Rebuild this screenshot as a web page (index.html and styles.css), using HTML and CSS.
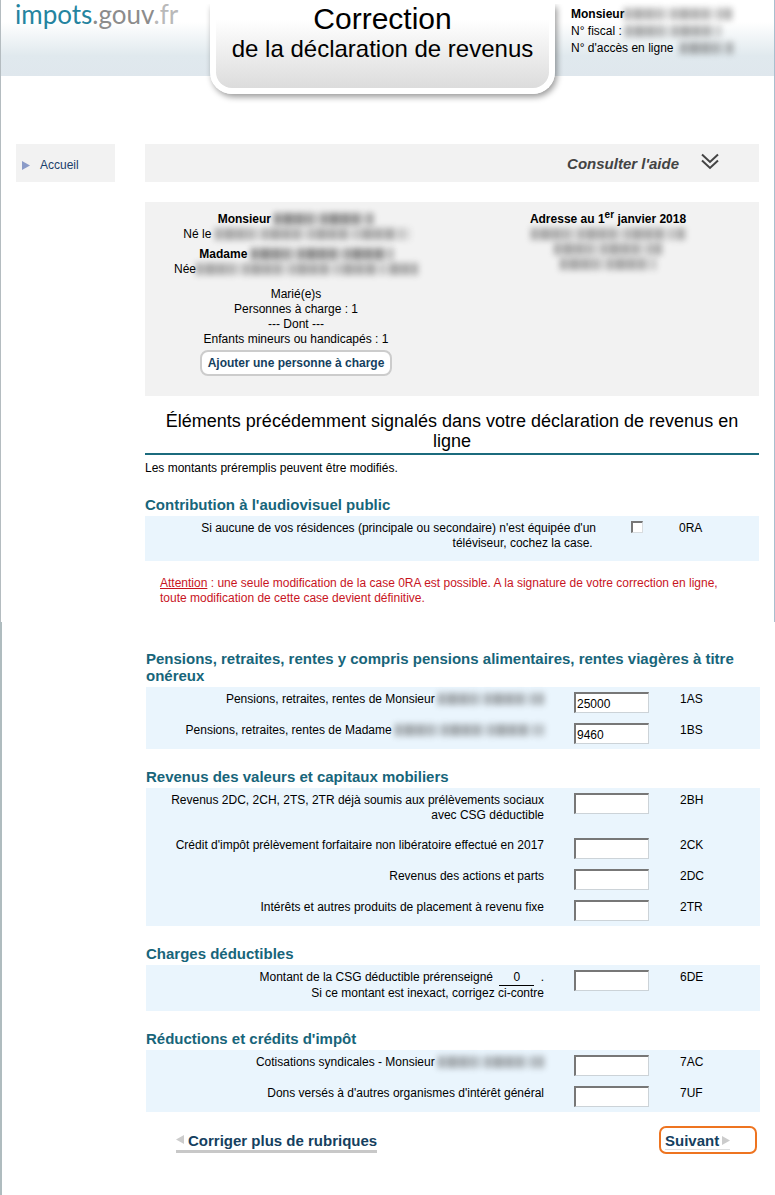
FILE: index.html
```html
<!DOCTYPE html>
<html lang="fr">
<head>
<meta charset="utf-8">
<meta name="viewport" content="width=device-width, initial-scale=1">
<title>Correction de la déclaration de revenus</title>
<link rel="stylesheet" href="styles.css">
</head>
<body>
<div class="upper">
  <header class="header">
    <a class="logo" href="#">impots<span class="logo-gouv">.gouv</span><span class="logo-fr">.fr</span></a>
    <h1 class="banner"><span class="banner-main">Correction</span><span class="banner-sub">de la déclaration de revenus</span></h1>
    <div class="account">
      <div><b>Monsieur</b><span class="mask mask-108"></span></div>
      <div>N° fiscal : <span class="mask mask-96"></span></div>
      <div>N° d'accès en ligne <span class="mask mask-code"></span></div>
    </div>
  </header>
  <div class="layout">
    <nav class="menu">
      <a class="menu-link" href="#"><svg class="menu-arrow" viewBox="0 0 8 9"><path d="M0 0L8 4.5L0 9Z" fill="#8b9bc8"/></svg>Accueil</a>
    </nav>
    <main class="content">
      <button class="help" type="button">Consulter l'aide
        <svg class="help-icon" viewBox="0 0 18 22"><path d="M1 1.500L9 9L17 1.500M1 7.500L9 15L17 7.500" fill="none" stroke="#444" stroke-width="2"/></svg>
      </button>
      <section class="identity">
        <div>
          <div class="person">
            <div><b>Monsieur</b> <span class="mask mask-100 dark"></span></div>
            <div>Né le <span class="mask mask-194"></span></div>
          </div>
          <div class="person">
            <div><b>Madame</b> <span class="mask mask-142 dark"></span></div>
            <div>Née<span class="mask mask-222"></span></div>
          </div>
          <div class="family">
            <div>Marié(e)s</div>
            <div>Personnes à charge : 1</div>
            <div>--- Dont ---</div>
            <div>Enfants mineurs ou handicapés : 1</div>
          </div>
          <button class="add" type="button">Ajouter une personne à charge</button>
        </div>
        <div class="address">
          <b>Adresse au 1<sup>er</sup> janvier 2018</b>
          <div><span class="mask mask-154"></span></div>
          <div><span class="mask mask-108"></span></div>
          <div><span class="mask mask-96"></span></div>
        </div>
      </section>
      <h2 class="title">Éléments précédemment signalés dans votre déclaration de revenus en ligne</h2>
      <p class="intro">Les montants préremplis peuvent être modifiés.</p>
      <h3 class="heading">Contribution à l'audiovisuel public</h3>
      <table class="fields">
        <tr>
          <td class="label"><label for="f0ra">Si aucune de vos résidences (principale ou secondaire) n'est équipée d'un téléviseur, cochez la case.&nbsp;</label></td>
          <td class="check-cell"><input class="check" type="checkbox" id="f0ra"></td>
          <td class="code">0RA</td>
        </tr>
      </table>
      <p class="warning"><u>Attention</u> : une seule modification de la case 0RA est possible. A la signature de votre correction en ligne, toute modification de cette case devient définitive.</p>
    </main>
  </div>
</div>
<div class="lower">
  <h3 class="heading">Pensions, retraites, rentes y compris pensions alimentaires, rentes viagères à titre onéreux</h3>
  <table class="fields">
    <tr>
      <td class="label"><label for="f1as">Pensions, retraites, rentes de Monsieur <span class="mask mask-106"></span></label></td>
      <td class="field"><input class="amount" type="text" id="f1as" value="25000"></td>
      <td class="code">1AS</td>
    </tr>
    <tr>
      <td class="label"><label for="f1bs">Pensions, retraites, rentes de Madame <span class="mask mask-149"></span></label></td>
      <td class="field"><input class="amount" type="text" id="f1bs" value="9460"></td>
      <td class="code">1BS</td>
    </tr>
  </table>
  <h3 class="heading">Revenus des valeurs et capitaux mobiliers</h3>
  <table class="fields">
    <tr>
      <td class="label"><label for="f2bh">Revenus 2DC, 2CH, 2TS, 2TR déjà soumis aux prélèvements sociaux avec CSG déductible</label></td>
      <td class="field"><input class="amount" type="text" id="f2bh"></td>
      <td class="code">2BH</td>
    </tr>
    <tr>
      <td class="label"><label for="f2ck">Crédit d'impôt prélèvement forfaitaire non libératoire effectué en 2017</label></td>
      <td class="field"><input class="amount" type="text" id="f2ck"></td>
      <td class="code">2CK</td>
    </tr>
    <tr>
      <td class="label"><label for="f2dc">Revenus des actions et parts</label></td>
      <td class="field"><input class="amount" type="text" id="f2dc"></td>
      <td class="code">2DC</td>
    </tr>
    <tr>
      <td class="label"><label for="f2tr">Intérêts et autres produits de placement à revenu fixe</label></td>
      <td class="field"><input class="amount" type="text" id="f2tr"></td>
      <td class="code">2TR</td>
    </tr>
  </table>
  <h3 class="heading">Charges déductibles</h3>
  <table class="fields">
    <tr>
      <td class="label"><label for="f6de">Montant de la CSG déductible prérenseigné <span class="prefilled">0</span> .<br>Si ce montant est inexact, corrigez ci-contre</label></td>
      <td class="field"><input class="amount" type="text" id="f6de"></td>
      <td class="code">6DE</td>
    </tr>
  </table>
  <h3 class="heading">Réductions et crédits d'impôt</h3>
  <table class="fields">
    <tr>
      <td class="label"><label for="f7ac">Cotisations syndicales - Monsieur <span class="mask mask-106"></span></label></td>
      <td class="field"><input class="amount" type="text" id="f7ac"></td>
      <td class="code">7AC</td>
    </tr>
    <tr>
      <td class="label"><label for="f7uf">Dons versés à d'autres organismes d'intérêt général</label></td>
      <td class="field"><input class="amount" type="text" id="f7uf"></td>
      <td class="code">7UF</td>
    </tr>
  </table>
  <div class="actions">
    <a class="back" href="#"><svg class="arrow" viewBox="0 0 8 9"><path d="M8 0L0 4.500L8 9Z" fill="#ccc"/></svg>Corriger plus de rubriques</a>
    <a class="next" href="#"><span class="next-text">Suivant<svg class="arrow" viewBox="0 0 8 9"><path d="M0 0L8 4.500L0 9Z" fill="#ccc"/></svg></span></a>
  </div>
</div>
</body>
</html>
```
FILE: styles.css
```css
* { box-sizing: border-box; }

body {
  margin: 0;
  display: flex;
  flex-direction: column;
  min-height: 100vh;
  background: #fff;
  color: #000;
  font: 12px/15px "Liberation Sans", Arial, sans-serif;
}

h1, h2, h3, p { margin: 0; font-weight: normal; }
a { text-decoration: none; }

.upper {
  border-left: 1px solid #b4bcc0;
  border-right: 1px solid #a9bfce;
  padding-bottom: 16px;
}

/* Header */
.header {
  display: grid;
  grid-template-columns: 1fr 345px 1fr;
  align-items: start;
  min-height: 144px;
  padding-right: 10px;
  background: linear-gradient(#fff 22px, #e0e9ee 56px, #dfe7ed) no-repeat 0 0 / 100% 76px;
}

.logo {
  padding-left: 14px;
  color: #2584a0;
  font: 400 26px/28px Lato, sans-serif;
  white-space: nowrap;
}
.logo-gouv { color: #8c8c8c; }
.logo-fr { color: #b9b9b9; }

.banner {
  display: flex;
  flex-direction: column;
  align-items: center;
  height: 90px;
  margin-top: 4px;
  border: 6px solid #fff;
  border-top: 0;
  border-radius: 0 0 22px 22px;
  background: linear-gradient(#fff 15px, #dcdcdc);
  box-shadow: 2px 3px 6px rgba(0, 0, 0, 0.4);
  clip-path: inset(0 -12px -12px -12px);
  white-space: nowrap;
}
.banner-main { font-size: 30px; line-height: 30px; }
.banner-sub { font-size: 24px; line-height: 30px; }

.account {
  padding: 6px 0 0 16px;
  line-height: 17px;
  white-space: nowrap;
}

/* Smudged strips standing in for hidden personal data */
.mask {
  display: inline-block;
  height: 12px;
  vertical-align: -2px;
  background:
    repeating-linear-gradient(90deg, rgba(60, 60, 60, 0.5) 0 5px, transparent 5px 9px, rgba(60, 60, 60, 0.4) 9px 20px, transparent 20px 23px),
    repeating-linear-gradient(90deg, rgba(80, 80, 80, 0.4) 0 35px, transparent 35px 48px);
  filter: blur(3px);
  opacity: 0.65;
}
.dark { opacity: 0.9; }
.mask-96 { width: 96px; }
.mask-100 { width: 100px; }
.mask-106 { width: 106px; }
.mask-108 { width: 108px; }
.mask-142 { width: 142px; }
.mask-149 { width: 149px; }
.mask-154 { width: 154px; }
.mask-194 { width: 194px; }
.mask-222 { width: 222px; }
.mask-code { width: 54px; margin-left: 3px; }

/* Page columns */
.layout {
  display: grid;
  grid-template-columns: 99px minmax(0, 1fr);
  gap: 30px;
  align-items: start;
  padding: 0 15px;
}

.menu { background: #f2f2f2; }
.menu-link {
  display: flex;
  align-items: center;
  gap: 10px;
  min-height: 38px;
  padding: 4px 6px 0;
  color: #1a406b;
}
.menu-arrow { width: 8px; height: 9px; }

.help {
  display: flex;
  justify-content: flex-end;
  align-items: center;
  gap: 22px;
  width: 100%;
  min-height: 38px;
  padding: 1px 40px 0 0;
  border: 0;
  background: #f2f2f2;
  color: #444;
  font: italic bold 15px/18px "Liberation Sans", Arial, sans-serif;
}
.help-icon { width: 18px; height: 22px; }

.identity {
  display: grid;
  grid-template-columns: 1fr 1fr;
  gap: 10px;
  margin-top: 20px;
  padding: 10px 0 20px;
  background: #f2f2f2;
  text-align: center;
}
.person { margin-bottom: 5px; }
.family { padding-top: 5px; }
.add {
  height: 26px;
  margin-top: 3px;
  padding: 0 6px;
  border: 2px solid #ccc;
  border-radius: 8px;
  background: #fff;
  color: #153f60;
  font: bold 12px/15px "Liberation Sans", Arial, sans-serif;
}
.address sup { font-size: 10px; line-height: 0; }

.title {
  margin-top: 15px;
  padding-bottom: 2px;
  border-bottom: 2px solid #1b6b7d;
  font-size: 18px;
  line-height: 20px;
  text-align: center;
}
.intro { margin: 6px 0 20px; }

.heading {
  color: #17657a;
  font-size: 15px;
  font-weight: bold;
  line-height: 17px;
  padding-bottom: 3px;
}

/* Form rows */
.fields {
  width: 100%;
  border-collapse: collapse;
  background: #eaf5fd;
}
.fields td { padding: 0; vertical-align: top; }
.fields .label { padding: 5px 0 10px; text-align: right; }
.fields .field { width: 136px; padding: 5px 0 5px 30px; }
.fields .check-cell { width: 83px; padding: 5px 0 0 35px; }
.fields .code { width: 80px; padding-top: 5px; }

.amount {
  display: block;
  width: 75px;
  height: 21px;
  padding: 1px 1px 0;
  border: 1px solid #ccd3d8;
  border-top: 2px solid #777;
  border-left: 2px solid #777;
  background: #fff;
  font: 12px/15px "Liberation Sans", Arial, sans-serif;
}
.check {
  appearance: none;
  display: block;
  width: 12px;
  height: 12px;
  margin: 0;
  border: 1px solid #d8dcdf;
  border-top: 2px solid #777;
  border-left: 2px solid #777;
  background: #fff;
}
.prefilled {
  display: inline-block;
  width: 35px;
  margin: 0 3px;
  border-bottom: 1px solid #000;
  text-align: center;
}

.warning { padding: 15px 15px 0; color: #c8141e; }

.lower {
  flex: 1;
  padding: 28px 15px 42px 144px;
  border-left: 2px solid #afbcbf;
}
.fields + .heading { margin-top: 19px; }

.actions {
  display: flex;
  justify-content: space-between;
  align-items: flex-start;
  padding: 14px 3px 0 30px;
  font-size: 15px;
  font-weight: bold;
  line-height: 18px;
}
.actions a { color: #153f60; }
.arrow { width: 8px; height: 9px; }
.back {
  padding-top: 6px;
  border-bottom: 3px solid #c8c8c8;
}
.back .arrow { margin-right: 4px; vertical-align: 2px; }
.next {
  width: 98px;
  height: 28px;
  padding: 4px;
  border: 2px solid #ee7420;
  border-radius: 7px;
}
.next-text { border-bottom: 1px solid #ddd; }
.next .arrow { margin-left: 3px; vertical-align: 1px; }
```
